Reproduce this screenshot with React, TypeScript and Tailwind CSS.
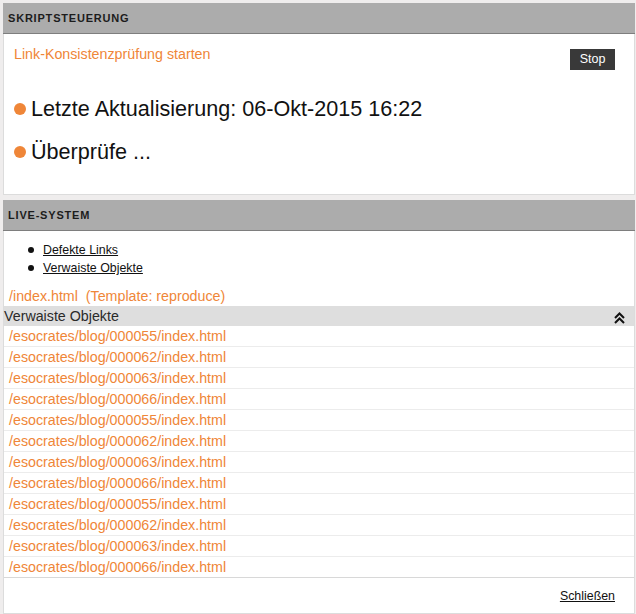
import React from "react";

const rows = [
  "000055", "000062", "000063", "000066",
  "000055", "000062", "000063", "000066",
  "000055", "000062", "000063", "000066",
];

function Header({ title }: { title: string }) {
  return (
    <div className="h-[31px] bg-[#acacac] border-b border-[#7e7e7e] flex items-center pl-[5px]">
      <span className="text-[11px] font-bold tracking-[0.8px] text-[#1c1c1c] leading-none">{title}</span>
    </div>
  );
}

function Dot() {
  return <span className="block w-[12px] h-[12px] rounded-full bg-[#ef8638] shrink-0" />;
}

export default function App() {
  return (
    <div
      className="min-h-[614px] w-[636px] bg-[#efeded] pt-[3px]"
      style={{ fontFamily: '"Liberation Sans", Arial, sans-serif' }}
    >
      {/* Panel 1 */}
      <div className="ml-[3px] w-[632px] bg-white">
        <Header title="SKRIPTSTEUERUNG" />
        <div className="border-x border-b border-[#dcdcdc] px-[10px] pt-[10px] pb-[30px]">
          <div className="flex justify-between items-start h-[26px]">
            <span className="text-[14.25px] leading-[20px] text-[#ef8638]">Link-Konsistenzprüfung starten</span>
            <button className="mt-[5px] mr-[9px] w-[45px] h-[21px] bg-[#393939] text-white text-[12.5px] leading-[21px] text-center">
              Stop
            </button>
          </div>
          <div className="mt-[27px] flex flex-col gap-[19px]">
            <div className="flex items-center gap-[5px]">
              <Dot />
              <span className="text-[21.6px] leading-[24px] text-[#111]">Letzte Aktualisierung: 06-Okt-2015 16:22</span>
            </div>
            <div className="flex items-center gap-[5px]">
              <Dot />
              <span className="text-[21.6px] leading-[24px] text-[#111]">Überprüfe ...</span>
            </div>
          </div>
        </div>
      </div>

      {/* Panel 2 */}
      <div className="ml-[3px] mt-[5px] w-[632px] bg-white">
        <Header title="LIVE-SYSTEM" />
        <div className="border-x border-b border-[#dcdcdc]">
          <div className="pt-[10px] pl-[24px] flex flex-col">
            {["Defekte Links", "Verwaiste Objekte"].map((t) => (
              <div key={t} className="flex items-center gap-[9px] h-[18px]">
                <span className="block w-[6px] h-[6px] rounded-full bg-[#111]" />
                <a className="text-[12.4px] leading-[18px] text-[#111] underline">{t}</a>
              </div>
            ))}
          </div>
          <div className="mt-[9px] pl-[5px] text-[14.25px] leading-[20px] text-[#ef8638] whitespace-pre">
            /index.html  (Template: reproduce)
          </div>
          <div className="h-[20px] bg-[#dedede] flex items-center justify-between pr-[9px]">
            <span className="text-[14.25px] leading-[20px] text-[#2a2a2a]">Verwaiste Objekte</span>
            <svg className="mt-[3px]" width="11" height="12" viewBox="0 0 11 12" fill="none" stroke="#111" strokeWidth="2">
              <polyline points="1,6 5.5,1.5 10,6" />
              <polyline points="1,11 5.5,6.5 10,11" />
            </svg>
          </div>
          <div className="flex flex-col">
            {rows.map((r, i) => (
              <div
                key={i}
                className={
                  "h-[21px] pl-[5px] text-[14.25px] leading-[20px] text-[#ef8638] border-b " +
                  (i === rows.length - 1 ? "border-[#d8d8d8]" : "border-[#ececec]")
                }
              >
                /esocrates/blog/{r}/index.html
              </div>
            ))}
          </div>
          <div className="flex justify-end pt-[9px] pb-[8px] pr-[19px]">
            <a className="text-[12.4px] leading-[18px] text-[#111] underline">Schließen</a>
          </div>
        </div>
      </div>
    </div>
  );
}
